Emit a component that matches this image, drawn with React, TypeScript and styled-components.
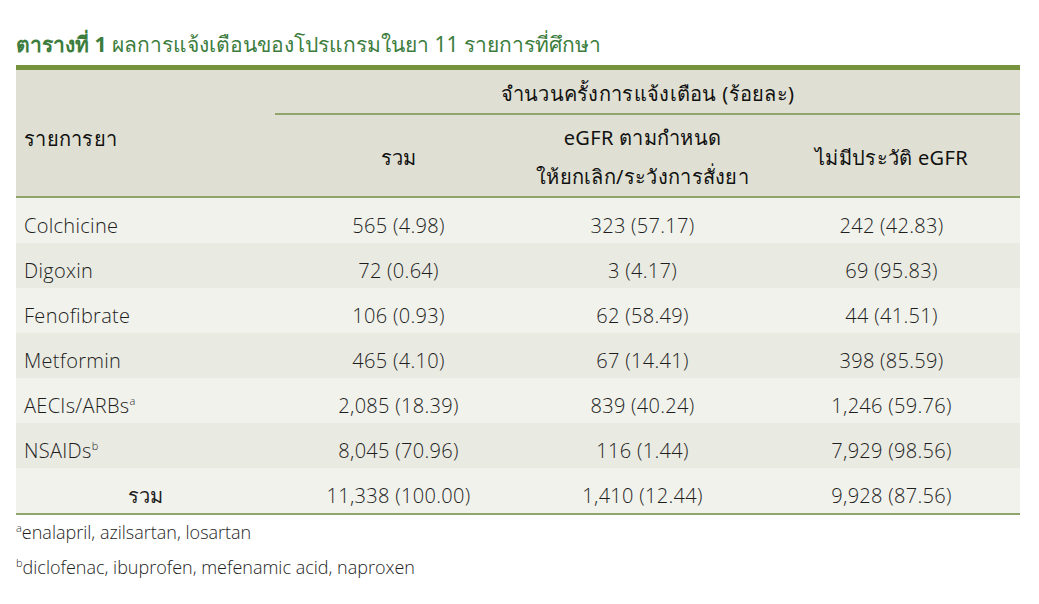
import React from "react";
import styled, { createGlobalStyle } from "styled-components";

const Global = createGlobalStyle`
  html, body {
    margin: 0;
    padding: 0;
    background: #fff;
  }
  body {
    font-family: "Noto Sans", "Liberation Sans", sans-serif;
    color: #1a1a1a;
  }
`;

const Page = styled.div`
  width: 1039px;
  height: 604px;
  padding: 28px 19px 0 16px;
  box-sizing: border-box;
`;

const Caption = styled.div`
  font-size: 21px;
  line-height: 32px;
  color: #3c7d3e;
  margin-bottom: 5px;

  b {
    font-weight: 700;
  }
`;

const Table = styled.table`
  width: 1004px;
  border-collapse: collapse;
  border-top: 3px solid #76923c;
  font-size: 20px;
  letter-spacing: 0.3px;

  td,
  th {
    padding: 0;
  }
`;

const Gap = styled.tr`
  height: 1px;
  background: #fff;
  border-bottom: 2px solid #76923c;
`;

const HeadRow = styled.tr<{ $h: number }>`
  height: ${(p) => p.$h}px;
  background: #dfe0d3;
`;

const HeadCell = styled.th<{ $left?: boolean; $line?: boolean; $pt?: number }>`
  font-weight: 400;
  color: #111;
  text-align: ${(p) => (p.$left ? "left" : "center")};
  padding-left: ${(p) => (p.$left ? "8px" : "0")} !important;
  padding-top: ${(p) => p.$pt ?? 0}px !important;
  vertical-align: middle;
  line-height: 39px;
  border-bottom: ${(p) => (p.$line ? "2px solid #8fa56b" : "none")};
`;

const Row = styled.tr<{ $alt: boolean }>`
  height: 45px;
  background: ${(p) => (p.$alt ? "#e9eae2" : "#f1f2ec")};
`;

const Cell = styled.td<{ $left?: boolean; $thai?: boolean }>`
  text-align: ${(p) => (p.$left ? "left" : "center")};
  padding-left: ${(p) => (p.$left ? "8px" : "0")} !important;
  padding-top: 11px !important;
  height: 34px;
  line-height: 28px;
  vertical-align: middle;
  font-family: ${(p) =>
    p.$thai ? `"Noto Sans", sans-serif` : `"Open Sans", "Noto Sans", sans-serif`};
  font-weight: ${(p) => (p.$thai ? 400 : 300)};
  color: #1e1e1e;

  sup {
    font-size: 11px;
    vertical-align: 8px;
    line-height: 0;
  }
`;

const TotalRow = styled.tr`
  height: 45px;
  background: #f1f2ec;
  border-bottom: 2px solid #8fa56b;
`;

const Notes = styled.div`
  margin-top: 0;
`;

const Note = styled.div`
  font-family: "Open Sans", "Noto Sans", sans-serif;
  font-weight: 300;
  font-size: 18px;
  line-height: 35px;
  color: #1e1e1e;

  sup {
    font-size: 11px;
    vertical-align: 7px;
    line-height: 0;
  }
`;

const rows: [React.ReactNode, string, string, string][] = [
  ["Colchicine", "565 (4.98)", "323 (57.17)", "242 (42.83)"],
  ["Digoxin", "72 (0.64)", "3 (4.17)", "69 (95.83)"],
  ["Fenofibrate", "106 (0.93)", "62 (58.49)", "44 (41.51)"],
  ["Metformin", "465 (4.10)", "67 (14.41)", "398 (85.59)"],
  [
    <>
      AECIs/ARBs<sup>a</sup>
    </>,
    "2,085 (18.39)",
    "839 (40.24)",
    "1,246 (59.76)",
  ],
  [
    <>
      NSAIDs<sup>b</sup>
    </>,
    "8,045 (70.96)",
    "116 (1.44)",
    "7,929 (98.56)",
  ],
];

export default function App() {
  return (
    <Page>
      <Global />
      <Caption>
        <b>ตารางที่ 1</b> ผลการแจ้งเตือนของโปรแกรมในยา 11 รายการที่ศึกษา
      </Caption>
      <Table>
        <colgroup>
          <col style={{ width: 259 }} />
          <col style={{ width: 247 }} />
          <col style={{ width: 241 }} />
          <col style={{ width: 257 }} />
        </colgroup>
        <tbody>
          <Gap>
            <td colSpan={4} />
          </Gap>
          <HeadRow $h={45}>
            <HeadCell $left rowSpan={2} $line $pt={10}>
              รายการยา
            </HeadCell>
            <HeadCell colSpan={3} $line $pt={4}>
              จำนวนครั้งการแจ้งเตือน (ร้อยละ)
            </HeadCell>
          </HeadRow>
          <HeadRow $h={81}>
            <HeadCell $line $pt={3}>
              รวม
            </HeadCell>
            <HeadCell $line $pt={3}>
              eGFR ตามกำหนด
              <br />
              ให้ยกเลิก/ระวังการสั่งยา
            </HeadCell>
            <HeadCell $line $pt={3}>
              ไม่มีประวัติ eGFR
            </HeadCell>
          </HeadRow>
          {rows.map((r, i) => (
            <Row key={i} $alt={i % 2 === 1}>
              <Cell $left>{r[0]}</Cell>
              <Cell>{r[1]}</Cell>
              <Cell>{r[2]}</Cell>
              <Cell>{r[3]}</Cell>
            </Row>
          ))}
          <TotalRow>
            <Cell $thai>รวม</Cell>
            <Cell>11,338 (100.00)</Cell>
            <Cell>1,410 (12.44)</Cell>
            <Cell>9,928 (87.56)</Cell>
          </TotalRow>
        </tbody>
      </Table>
      <Notes>
        <Note>
          <sup>a</sup>enalapril, azilsartan, losartan
        </Note>
        <Note>
          <sup>b</sup>diclofenac, ibuprofen, mefenamic acid, naproxen
        </Note>
      </Notes>
    </Page>
  );
}
